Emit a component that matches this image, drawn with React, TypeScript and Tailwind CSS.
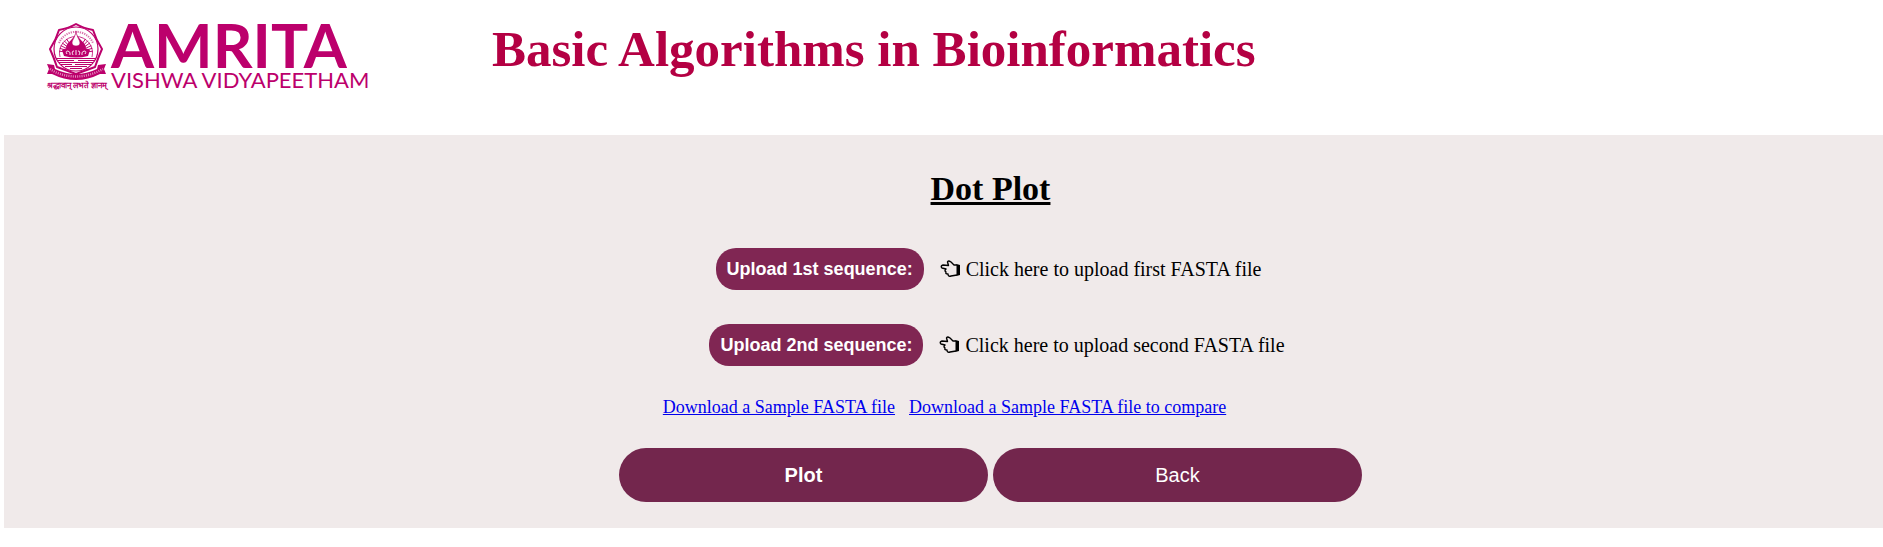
import { useRef } from 'react';

interface UploadRow {
  id: string;
  button: string;
  hint: string;
  offset: string;
}

const rows: UploadRow[] = [
  { id: 'seq1', button: 'Upload 1st sequence:', hint: 'Click here to upload first FASTA file', offset: 'pl-[90px]' },
  { id: 'seq2', button: 'Upload 2nd sequence:', hint: 'Click here to upload second FASTA file', offset: 'pl-[107px]' },
];

const rays = [-84, -74, -64, -54, -44, -34, 34, 44, 54, 64, 74, 84];

function Emblem() {
  return (
    <svg viewBox="0 0 61 58" className="h-[58px] w-[61px] shrink-0" fill="none" stroke="#bc006c" aria-hidden="true">
      {/* octagonal border */}
      <path
        d="M30 1 Q37 5 47 7 Q50 17 56 26 Q52 35 49 44 Q38 48 30 51 Q22 48 11 44 Q8 35 4 26 Q10 17 13 7 Q23 5 30 1Z"
        strokeWidth="2"
        strokeLinejoin="round"
      />
      <circle cx="30" cy="26" r="22" strokeWidth="1.2" />
      <path d="M13 20 A18.500 18.500 0 0 1 47 20" strokeWidth="2" strokeDasharray="1.3 1" opacity="0.55" />
      <path d="M14 34 A16.500 16.500 0 1 1 46 34" strokeWidth="0.8" />
      {rays.map((angle) => (
        <path key={angle} d="M30 20V13" strokeWidth="0.9" transform={`rotate(${angle} 30 30)`} />
      ))}
      {/* lamp and lotus */}
      <path d="M30 9 C31 16 40 19 40 25 L37 30 H23 L20 25 C20 19 29 16 30 9Z" fill="#bc006c" stroke="none" />
      <path d="M30 8 C31 15 34 17 34 20 C34 24 26 24 26 20 C26 17 29 15 30 8Z" fill="#fff" stroke="#bc006c" strokeWidth="0.6" />
      <path d="M16 27 Q20 24 23 27 Q26 23 30 26 Q34 23 37 27 Q40 24 44 27 L42 33 Q30 36 18 33Z" fill="#bc006c" stroke="none" />
      <path
        d="M21 31 Q19 28 22 28 Q25 29 24 32 M27 32 Q25 28 28 28 M30 32 V27 M33 32 Q35 28 32 28 M39 31 Q41 28 38 28 Q35 29 36 32"
        stroke="#fff"
        strokeWidth="0.9"
      />
      <path d="M10 35.500 H50 M11 37.500 H28 M32 37.500 H49 M13 39.500 H47 M15 41.500 H26 M29 41.500 H45 M19 43.500 H41 M24 45.500 H36" strokeWidth="1" />
      {/* ribbon */}
      <path
        d="M1 41 L8 42 L9 46 Q30 56 51 46 L52 42 L60 41 L58 46 L60 51 L54 51 Q30 63 6 51 L1 51 L3 46Z"
        fill="#bc006c"
        stroke="none"
      />
      <path d="M4 46 L9 49 Q30 58 51 49 L57 46" stroke="#fff" strokeWidth="2.400" strokeDasharray="1 1.200" opacity="0.55" />
    </svg>
  );
}

function Logo() {
  return (
    <a href="#" className="flex w-[345px] shrink-0 gap-1 text-[#bc006c] no-underline" aria-label="Amrita Vishwa Vidyapeetham">
      <span className="flex w-[61px] shrink-0 flex-col items-center">
        <Emblem />
        <span className="text-[8px] leading-[10px] font-bold whitespace-nowrap">श्रद्धावान् लभते ज्ञानम्</span>
      </span>
      <span className="flex flex-col gap-1 font-[Lato,sans-serif] whitespace-nowrap">
        <span className="text-[62px] leading-[42px] font-bold">AMRITA</span>
        <span className="text-[22px] leading-[22px]">VISHWA VIDYAPEETHAM</span>
      </span>
    </a>
  );
}

function HandLeft() {
  return (
    <svg viewBox="0 0 21 18" className="h-[18px] w-[21px] shrink-0" fill="none" stroke="#000" strokeWidth="1.4" aria-hidden="true">
      <path
        d="M17 5 L14 5 Q12 3 11 2 Q8 0 7.500 2 L8.500 5.500 L3 5 Q0 6 2 8 L6 9 Q4 11 6 12 Q5 14 8 14 Q8 17 11 16 L17 15"
        strokeLinejoin="round"
      />
      <path d="M16.500 4 L20 5 V15 L16.500 16Z" fill="#000" stroke="none" />
    </svg>
  );
}

function Upload({ row }: { row: UploadRow }) {
  const input = useRef<HTMLInputElement>(null);

  return (
    <div className={`flex items-center justify-center ${row.offset}`}>
      <button
        type="button"
        onClick={() => input.current?.click()}
        className="h-[42px] rounded-[20px] bg-[#802653] px-[11px] font-['Liberation_Sans',sans-serif] text-[18px] font-bold text-white"
      >
        {row.button}
      </button>
      <label htmlFor={row.id} className="ml-4 flex cursor-pointer items-center gap-[5px] text-[20px] leading-6">
        <HandLeft />
        {row.hint}
      </label>
      <input ref={input} id={row.id} type="file" accept=".fasta,.fa" className="hidden" />
    </div>
  );
}

export default function App() {
  return (
    <div className="bg-white font-['Liberation_Serif',serif] text-black">
      <header className="flex h-[135px] items-start pt-[23px] pl-[46px]">
        <Logo />
        <h1 className="ml-[101px] text-[51px] leading-[52px] font-bold whitespace-nowrap text-[#b40043]">
          Basic Algorithms in Bioinformatics
        </h1>
      </header>

      <main className="ml-1 bg-[#f0eaea] pt-[35px] pb-[26px]">
        <h2 className="pl-[94px] text-center text-[34px] leading-[38px] font-bold underline">Dot Plot</h2>

        <div className="mt-10 flex flex-col gap-[34px]">
          {rows.map((row) => (
            <Upload key={row.id} row={row} />
          ))}
        </div>

        <div className="mt-[29px] flex justify-center gap-[14px] pl-[2px] text-[18px] leading-6 text-[#0000ee]">
          <a href="#sample" className="underline">Download a Sample FASTA file</a>
          <a href="#compare" className="underline">Download a Sample FASTA file to compare</a>
        </div>

        <div className="mt-[29px] flex justify-center gap-[5px] pl-[94px] font-['Liberation_Sans',sans-serif] text-[20px] text-white">
          <button type="submit" className="h-[54px] w-[369px] rounded-[27px] bg-[#73264d] font-bold">Plot</button>
          <button type="button" className="h-[54px] w-[369px] rounded-[27px] bg-[#73264d]">Back</button>
        </div>
      </main>
    </div>
  );
}
